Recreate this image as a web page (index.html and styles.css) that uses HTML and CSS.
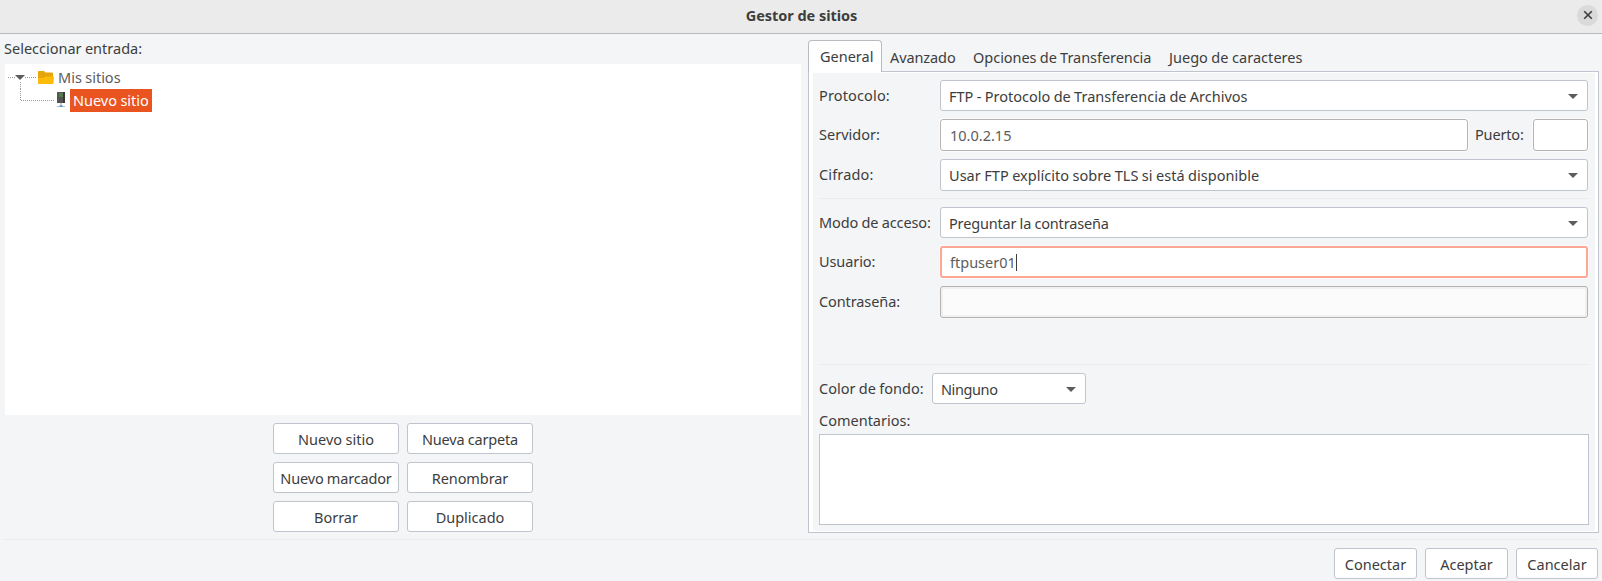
FILE: index.html
```html
<!DOCTYPE html>
<html lang="es">
<head>
<meta charset="utf-8">
<title>Gestor de sitios</title>
<link rel="stylesheet" href="styles.css">
</head>
<body>
<div class="window">
  <header class="titlebar">
    <h1 class="title">Gestor de sitios</h1>
    <button class="close" aria-label="Cerrar"><svg width="10" height="10" viewBox="0 0 10 10"><path d="M1.200 1.200 8.800 8.800M8.800 1.200 1.200 8.800"/></svg></button>
  </header>
  <main class="content">
    <section class="sites">
      <div class="heading"><span class="t">Seleccionar entrada:</span></div>
      <div class="tree">
        <div class="node root">
          <svg class="guide" width="32" height="23" viewBox="0 0 32 23"><path class="dots" d="M3 11.500H11M20 11.500H32M15.500 16V23"/><path class="arrow" d="M10 9h10l-5 5z"/></svg>
          <svg class="folder" width="17" height="14" viewBox="0 0 17 14"><path fill="#e6a50a" d="M1 0h5l1.500 1.500H14q1 0 1 1V9H0V1q0-1 1-1z"/><path fill="#fdbc0b" d="M0 13V7h5.500l2-1.500H15q1 0 1 1L15.500 12q0 1-1 1z"/></svg>
          <span class="t t-root">Mis sitios</span>
        </div>
        <div class="node child">
          <svg class="guide" width="50" height="23" viewBox="0 0 50 23"><path class="dots" d="M15.500 0V11.500H49"/></svg>
          <svg class="server" width="10" height="16" viewBox="0 0 10 16"><path fill="#555" d="M1 0h8v11H1z"/><path fill="#38383a" d="M7 0h2v11H7z"/><path fill="#4aa546" d="M3 1.500h4v1h-4zM3 3.500h4v1h-4z"/><path fill="#999" d="M4.500 11h1v3h-1z"/><path fill="#bdbdbd" d="M1 14h8v1H1z"/><path fill="#4a90d9" d="M3.500 13.500h3v1.500h-3z"/></svg>
          <span class="selected"><span class="t">Nuevo sitio</span></span>
        </div>
      </div>
      <div class="actions">
        <button class="btn"><span class="t">Nuevo sitio</span></button>
        <button class="btn"><span class="t tight">Nueva carpeta</span></button>
        <button class="btn"><span class="t tight">Nuevo marcador</span></button>
        <button class="btn"><span class="t t-rename">Renombrar</span></button>
        <button class="btn"><span class="t">Borrar</span></button>
        <button class="btn"><span class="t">Duplicado</span></button>
      </div>
    </section>
    <section class="notebook">
      <nav class="tabs">
        <a class="tab active"><span class="t">General</span></a>
        <a class="tab"><span class="t t-adv">Avanzado</span></a>
        <a class="tab"><span class="t t-opt">Opciones de Transferencia</span></a>
        <a class="tab"><span class="t t-charset">Juego de caracteres</span></a>
      </nav>
      <div class="page">
        <div class="row r31"><label><span class="t wide">Protocolo:</span></label>
          <div class="combo"><span class="t">FTP - Protocolo de Transferencia de Archivos</span><i class="caret"></i></div></div>
        <div class="row r32"><label><span class="t">Servidor:</span></label>
          <div class="entry"><span class="t">10.0.2.15</span></div>
          <label class="port-label"><span class="t tight">Puerto:</span></label><div class="entry port"></div></div>
        <div class="row r32"><label><span class="t wide">Cifrado:</span></label>
          <div class="combo"><span class="t t-cifv">Usar FTP explícito sobre TLS si está disponible</span><i class="caret"></i></div></div>
        <hr class="rule access">
        <div class="row r31"><label><span class="t t-mode">Modo de acceso:</span></label>
          <div class="combo"><span class="t tight">Preguntar la contraseña</span><i class="caret"></i></div></div>
        <div class="row r32"><label><span class="t t-user">Usuario:</span></label>
          <div class="entry focused"><span class="t">ftpuser01</span><i class="cursor"></i></div></div>
        <div class="row r32"><label><span class="t t-pass">Contraseña:</span></label>
          <div class="entry disabled"></div></div>
        <hr class="rule colour">
        <div class="row r31 colour-row"><label><span class="t">Color de fondo:</span></label>
          <div class="combo small"><span class="t t-none">Ninguno</span><i class="caret"></i></div></div>
        <div class="comment-label"><span class="t">Comentarios:</span></div>
        <div class="comments"></div>
      </div>
    </section>
  </main>
  <footer class="footer">
    <button class="btn"><span class="t">Conectar</span></button>
    <button class="btn"><span class="t">Aceptar</span></button>
    <button class="btn last"><span class="t">Cancelar</span></button>
  </footer>
</div>
</body>
</html>
```
FILE: styles.css
```css
* { box-sizing: border-box; }
body { margin: 0; background: #f4f5f7; color: #3d3d3d; font: 14.5px/20px "Noto Sans", sans-serif; }
.window { width: 1602px; height: 581px; display: flex; flex-direction: column; overflow: hidden; }
.titlebar { height: 34px; background: #ebebeb; border-bottom: 1px solid #b9b9be; display: grid; grid-template-columns: 1fr auto 1fr; align-items: center; padding-right: 4px; padding-left: 5px; }
.title { grid-column: 2; margin: 0; padding-bottom: 3px; font-size: 14.5px; line-height: 20px; font-weight: 700; letter-spacing: -0.05px; }
.close { justify-self: end; width: 21px; height: 21px; border: 0; border-radius: 50%; background: #dadada; padding: 0; display: flex; align-items: center; justify-content: center; margin-top: -3px; }
.close svg { fill: none; stroke: #3d3d3d; stroke-width: 1.6; }
.content { display: flex; height: 505px; }
.sites { width: 808px; padding: 5px 7px 0 5px; }
.heading { height: 25px; margin-left: -1px; line-height: 19px; }

/* Text runs and their tracking */
.t { white-space: pre; display: inline-block; word-spacing: -0.4px; }
.tight { letter-spacing: -0.16px; }
.wide { letter-spacing: 0.15px; }
.t-root { margin-top: -1px; }
.t-rename { letter-spacing: -0.1px; }
.t-adv { letter-spacing: -0.1px; }
.t-opt { letter-spacing: -0.05px; }
.t-charset { letter-spacing: 0.05px; }
.t-cifv { letter-spacing: 0.04px; }
.t-mode { letter-spacing: -0.1px; }
.t-user { letter-spacing: -0.1px; }
.t-pass { letter-spacing: -0.1px; }
.t-none { letter-spacing: -0.4px; }

.tree { height: 351px; width: 796px; background: #fff; padding-top: 2px; }
.node { display: flex; height: 23px; align-items: center; color: #5c5c5c; }
.guide { flex: none; }
.dots { fill: none; stroke: #999; stroke-dasharray: 1 1; }
.arrow { fill: #5c5c5c; }
.folder { margin: 0 3px 0 1px; }
.server { margin: -1px 4px 0 1px; }
.selected { background: #e95420; color: #fff; height: 23px; width: 82px; padding: 1px 0 0 3px; }
.actions { display: grid; grid-template-columns: 126px 126px; gap: 8px; margin: 8px 0 0 268px; }
.btn { height: 31px; font: inherit; color: inherit; background: #fff; border: 1px solid #c0c4cc; border-radius: 3px; padding: 0; display: flex; align-items: center; justify-content: center; }
.notebook { width: 791px; padding-top: 6px; }
.tabs { display: flex; height: 31px; }
.tab { padding: 7px 9.5px 0 8px; }
.tab.active { width: 74px; height: 32px; margin-bottom: -1px; position: relative; background: #fff; border: 1px solid #b9bbc0; border-bottom: 0; border-radius: 4px 4px 0 0; padding: 5px 0 0 11px; }
.page { height: 462px; background: #f4f5f7; border: 1px solid #c0c4cc; box-shadow: inset 4px 0 #fff, inset -3px 0 #fff, inset 0 1px #fff, inset 0 -1px #fff; padding: 8px 9px 7px 10px; }
.row { display: flex; width: 769px; margin-bottom: 8px; }
.r31 { height: 31px; }
.r32 { height: 32px; }
.row label { width: 121px; padding-top: 5px; flex: none; }
.combo, .entry { flex: 1; height: 100%; background: #fff; border: 1px solid #c0c4cc; border-radius: 3px; display: flex; align-items: center; padding: 0 9px 0 8px; }
.entry { border-color: #b6b3b0; padding-left: 9px; color: #5c5c5c; box-shadow: 0 0 0 1px #fbfbfc; }
.caret { margin-left: auto; margin-top: 1px; border: 5px solid transparent; border-top-color: #5c5c5c; border-bottom: 0; }
.row .port-label { width: 65px; padding-left: 7px; }
.entry.port { flex: none; width: 55px; }
.entry.focused { border: 2px solid #fea694; padding-left: 8px; }
.cursor { width: 1px; height: 17px; background: #3d3d3d; }
.entry.disabled { background: #fbfbfb; box-shadow: inset 0 0 0 2px #f0f0f0; }
.rule { width: 770px; height: 1px; border: 0; background: #ebecee; margin: 0; }
.access { margin: -1px 0 8px; }
.colour { margin-top: 46px; margin-bottom: 8px; }
.colour-row label { width: 113px; }
.combo.small { flex: none; width: 154px; }
.comment-label { height: 24px; margin-top: -2px; }
.comments { width: 770px; height: 91px; background: #fff; border: 1px solid #c0c4cc; }
.footer { border-top: 1px solid #ebecee; margin: 0 4px; height: 42px; display: flex; justify-content: flex-end; gap: 8px; padding-top: 8px; }
.footer .btn { width: 83px; }
.footer .last { width: 82px; }
```
